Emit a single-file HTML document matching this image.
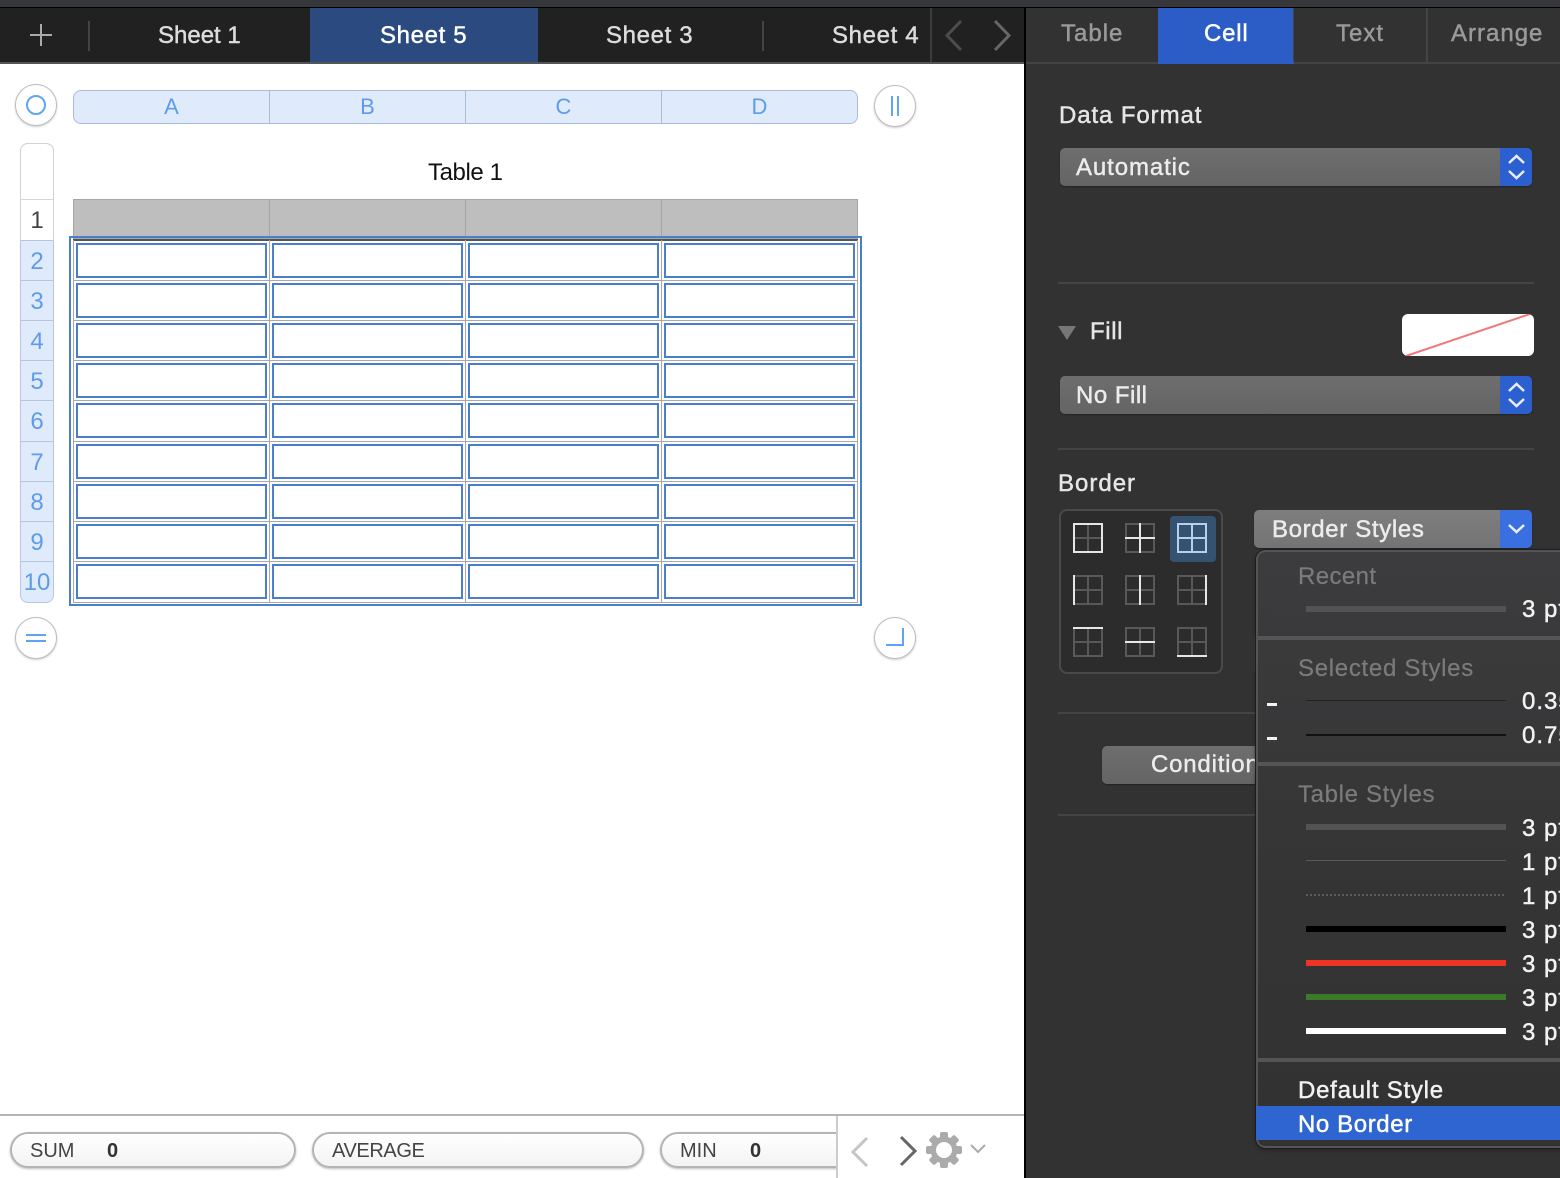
<!DOCTYPE html>
<html><head><meta charset="utf-8"><style>
html,body{margin:0;padding:0;width:1560px;height:1178px;overflow:hidden;background:#323232}
body{position:relative;font-family:"Liberation Sans",sans-serif}
.a{position:absolute}
.t{position:absolute;white-space:nowrap;height:30px;line-height:30px;font-size:24px}
.m{-webkit-text-stroke:.45px currentColor}
.dd{position:absolute;border-radius:5px;height:38px;background:linear-gradient(#6e6e6e,#646464);box-shadow:0 1px 1px #222}
.sep{position:absolute;left:1058px;width:476px;height:2px;background:#444}
.b{position:absolute;background:#2c5fd0;left:1500px;width:32px;height:38px;border-radius:0 5px 5px 0}
.h{position:absolute;box-sizing:border-box;width:42px;height:42px;border:1.500px solid #bdbdbd;border-radius:50%;background:#fff;box-shadow:0 1px 2px #ccc}
.rn{position:absolute;left:20px;width:34px;text-align:center;font-size:24px;line-height:30px;height:30px;color:#5e9bea}
.cl{position:absolute;top:92px;text-align:center;font-size:22px;line-height:30px;color:#5e9bea;width:197px}
.pt{position:absolute;left:1522px;white-space:nowrap;height:30px;line-height:30px;font-size:24px;letter-spacing:1px;color:#f2f2f2;-webkit-text-stroke:.45px currentColor}
.ln{position:absolute;left:1306px;width:200px}
.hd{position:absolute;left:1298px;white-space:nowrap;height:30px;line-height:30px;font-size:24px;color:#7b7b7b;-webkit-text-stroke:.2px currentColor}
.pl{position:absolute;top:1132px;height:32px;border:2px solid #b4b4b4;border-radius:18px;background:linear-gradient(#fff,#f3f3f3);box-shadow:0 1px 2px #bbb}
.st{position:absolute;top:1136px;line-height:30px;height:30px;font-size:20px;color:#444;white-space:nowrap}
</style></head><body>

<!-- top strip -->
<div class="a" style="left:0;top:0;width:1560px;height:7px;background:#36373a"></div>
<div class="a" style="left:0;top:7px;width:1560px;height:1px;background:#000"></div>

<!-- left document -->
<div class="a" style="left:0;top:8px;width:1024px;height:54px;background:#212121"></div>
<div class="a" style="left:0;top:62px;width:1024px;height:2px;background:#555"></div>
<div class="a" style="left:0;top:64px;width:1024px;height:1114px;background:#fff"></div>
<div class="a" style="left:1024px;top:8px;width:2px;height:1170px;background:#000"></div>

<div class="a" style="left:310px;top:8px;width:228px;height:54px;background:#2b4a80"></div>
<div class="a" style="left:88px;top:21px;width:2px;height:30px;background:#444"></div>
<div class="a" style="left:762px;top:21px;width:2px;height:30px;background:#444"></div>
<div class="a" style="left:930px;top:8px;width:2px;height:54px;background:#3c3c3c"></div>
<svg class="a" style="left:0;top:8px" width="1024" height="54">
<path d="M41 16V38M30 27H52" stroke="#aaa" stroke-width="2" fill="none"/>
<path d="M961 13L947 27.500L961 42" stroke="#4d4d4d" stroke-width="3" fill="none"/>
<path d="M995 13L1009 27.500L995 42" stroke="#666" stroke-width="3" fill="none"/>
</svg>
<div class="t m" style="left:158px;top:21px;color:#ddd">Sheet 1</div>
<div class="t m" style="left:380px;top:21px;color:#fff;letter-spacing:.65px">Sheet 5</div>
<div class="t m" style="left:606px;top:21px;color:#ddd;letter-spacing:.65px">Sheet 3</div>
<div class="t m" style="left:832px;top:21px;color:#ddd;letter-spacing:.65px">Sheet 4</div>

<!-- handles -->
<div class="h" style="left:15px;top:84px"></div>
<div class="a" style="left:26px;top:95px;width:16px;height:16px;border:2px solid #5fa4f4;border-radius:50%"></div>
<div class="h" style="left:874px;top:85px"></div>
<div class="a" style="left:891px;top:96px;width:2px;height:20px;background:#5fa4f4"></div>
<div class="a" style="left:897px;top:96px;width:2px;height:20px;background:#5fa4f4"></div>
<div class="h" style="left:15px;top:617px"></div>
<div class="a" style="left:26px;top:634px;width:20px;height:2px;background:#5fa4f4"></div>
<div class="a" style="left:26px;top:640px;width:20px;height:2px;background:#5fa4f4"></div>
<div class="h" style="left:874px;top:617px"></div>
<div class="a" style="left:886px;top:644px;width:18px;height:2px;background:#5fa4f4"></div>
<div class="a" style="left:902px;top:628px;width:2px;height:18px;background:#5fa4f4"></div>

<!-- col header -->
<div class="a" style="left:73px;top:90px;width:783px;height:32px;background:#dfeafb;border:1px solid #a9bcd8;border-radius:8px"></div>
<div class="a" style="left:269px;top:91px;width:1px;height:32px;background:#a9bcd8"></div>
<div class="a" style="left:465px;top:91px;width:1px;height:32px;background:#a9bcd8"></div>
<div class="a" style="left:661px;top:91px;width:1px;height:32px;background:#a9bcd8"></div>
<div class="cl" style="left:73px">A</div>
<div class="cl" style="left:269px">B</div>
<div class="cl" style="left:465px">C</div>
<div class="cl" style="left:661px">D</div>

<!-- row header -->
<div class="a" style="left:20px;top:143px;width:32px;height:458px;background:#dfeafb;border:1px solid #b7c6dd;border-radius:8px;overflow:hidden">
<div class="a" style="left:0;top:0;width:32px;height:96px;background:#fff"></div>
</div>
<div class="a" style="left:20px;top:143px;width:32px;height:96px;border:1px solid #d2d2d2;border-bottom:1px solid #b7c6dd;border-radius:8px 8px 0 0"></div>
<svg class="a" style="left:20px;top:190px" width="34" height="380">
<g fill="#b7c6dd"><rect x="1" y="50" width="32" height="1"/><rect x="1" y="90" width="32" height="1"/><rect x="1" y="130" width="32" height="1"/><rect x="1" y="170" width="32" height="1"/><rect x="1" y="210" width="32" height="1"/><rect x="1" y="251" width="32" height="1"/><rect x="1" y="291" width="32" height="1"/><rect x="1" y="331" width="32" height="1"/><rect x="1" y="371" width="32" height="1"/></g>
<rect x="1" y="9" width="32" height="1" fill="#d8d8d8"/>
</svg>
<div class="rn" style="top:206px;color:#444">1</div>
<div class="rn" style="top:247px">2</div>
<div class="rn" style="top:287px">3</div>
<div class="rn" style="top:327px">4</div>
<div class="rn" style="top:367px">5</div>
<div class="rn" style="top:407px">6</div>
<div class="rn" style="top:448px">7</div>
<div class="rn" style="top:488px">8</div>
<div class="rn" style="top:528px">9</div>
<div class="rn" style="top:568px">10</div>

<div class="t" style="left:428px;top:158px;color:#111;letter-spacing:-.4px">Table 1</div>

<!-- table -->
<svg class="a" style="left:60px;top:190px" width="810" height="425">
<rect x="13.500" y="9.500" width="784" height="39" fill="#bdbebd" stroke="#a6a6a6"/>
<g fill="#a6a6a6"><rect x="209" y="9" width="1" height="40"/><rect x="405" y="9" width="1" height="40"/><rect x="601" y="9" width="1" height="40"/></g>
<rect x="13" y="49" width="785" height="2" fill="#555"/>
<g fill="#a8a8a8">
<rect x="13" y="50" width="1" height="363"/><rect x="209" y="50" width="1" height="363"/><rect x="405" y="50" width="1" height="363"/><rect x="601" y="50" width="1" height="363"/><rect x="797" y="50" width="1" height="363"/>
<rect x="13" y="90" width="785" height="1"/><rect x="13" y="130" width="785" height="1"/><rect x="13" y="170" width="785" height="1"/><rect x="13" y="210" width="785" height="1"/><rect x="13" y="251" width="785" height="1"/><rect x="13" y="291" width="785" height="1"/><rect x="13" y="331" width="785" height="1"/><rect x="13" y="371" width="785" height="1"/><rect x="13" y="412" width="785" height="1"/>
</g>
<rect x="10" y="47" width="791" height="368" fill="none" stroke="#4a7fcb" stroke-width="2"/>
<g fill="none" stroke="#4a7fcb" stroke-width="2">
<g id="r"><rect x="17" y="54" width="189" height="33"/><rect x="213" y="54" width="189" height="33"/><rect x="409" y="54" width="189" height="33"/><rect x="605" y="54" width="189" height="33"/></g>
<use href="#r" y="40"/><use href="#r" y="80"/><use href="#r" y="120"/><use href="#r" y="160"/><use href="#r" y="201"/><use href="#r" y="241"/><use href="#r" y="281"/><use href="#r" y="321"/>
</g>
</svg>

<!-- status bar -->
<div class="a" style="left:0;top:1114px;width:1024px;height:2px;background:#b5b5b5"></div>
<div class="pl" style="left:10px;width:282px"></div>
<div class="pl" style="left:312px;width:328px"></div>
<div class="pl" style="left:660px;width:200px"></div>
<div class="a" style="left:837px;top:1116px;width:187px;height:62px;background:#fff"></div>
<div class="a" style="left:836px;top:1116px;width:2px;height:62px;background:#ccc"></div>
<div class="st" style="left:30px">SUM</div>
<div class="st" style="left:107px;font-weight:bold;color:#333">0</div>
<div class="st" style="left:332px;letter-spacing:-.4px">AVERAGE</div>
<div class="st" style="left:680px">MIN</div>
<div class="st" style="left:750px;font-weight:bold;color:#333">0</div>
<svg class="a" style="left:840px;top:1120px" width="184" height="58">
<path d="M27 18L13 32L27 46" fill="none" stroke="#c6c6c6" stroke-width="3"/>
<path d="M61 17L75 31L61 45" fill="none" stroke="#666" stroke-width="3"/>
<g transform="translate(104,30)" fill="#ababab">
<rect x="-4" y="-18" width="8" height="36" rx="2"/><rect x="-4" y="-18" width="8" height="36" rx="2" transform="rotate(45)"/><rect x="-4" y="-18" width="8" height="36" rx="2" transform="rotate(90)"/><rect x="-4" y="-18" width="8" height="36" rx="2" transform="rotate(135)"/>
<circle r="13.500"/><circle r="8" fill="#fff"/>
</g>
<path d="M131 25L138 32L145 25" fill="none" stroke="#aaa" stroke-width="2"/>
</svg>

<!-- right panel tabs -->
<div class="a" style="left:1026px;top:62px;width:534px;height:2px;background:#434343"></div>
<div class="a" style="left:1158px;top:8px;width:136px;height:56px;background:#2c5cc5"></div>
<div class="a" style="left:1293px;top:8px;width:1px;height:54px;background:#444"></div>
<div class="a" style="left:1426px;top:8px;width:2px;height:54px;background:#444"></div>
<div class="t m" style="left:1061px;top:19px;color:#9a9a9a;letter-spacing:1px">Table</div>
<div class="t m" style="left:1204px;top:19px;color:#fff;letter-spacing:.8px">Cell</div>
<div class="t m" style="left:1336px;top:19px;color:#9a9a9a;letter-spacing:1px">Text</div>
<div class="t m" style="left:1451px;top:19px;color:#9a9a9a;letter-spacing:1px">Arrange</div>

<div class="t m" style="left:1059px;top:101px;color:#e6e6e6;letter-spacing:.9px">Data Format</div>
<div class="dd" style="left:1060px;top:148px;width:472px"></div>
<div class="b" style="top:148px"></div>
<div class="t m" style="left:1076px;top:153px;color:#ececec;letter-spacing:.9px">Automatic</div>
<svg class="a" style="left:1500px;top:148px" width="32" height="38"><path d="M9 15L16.500 8L24 15M9 23L16.500 30L24 23" fill="none" stroke="#e8eefa" stroke-width="2.500"/></svg>

<div class="sep" style="top:282px"></div>
<svg class="a" style="left:1056px;top:322px" width="24" height="22"><path d="M2 4H20L11 18Z" fill="#777"/></svg>
<div class="t m" style="left:1090px;top:317px;color:#e6e6e6;letter-spacing:.6px">Fill</div>
<div class="a" style="left:1402px;top:314px;width:132px;height:42px;background:#fff;border-radius:6px;overflow:hidden">
<svg width="132" height="42"><path d="M4 42L128 0" stroke="#f07878" stroke-width="2"/></svg></div>
<div class="dd" style="left:1060px;top:376px;width:472px"></div>
<div class="b" style="top:376px"></div>
<div class="t m" style="left:1076px;top:381px;color:#ececec;letter-spacing:.5px">No Fill</div>
<svg class="a" style="left:1500px;top:376px" width="32" height="38"><path d="M9 15L16.500 8L24 15M9 23L16.500 30L24 23" fill="none" stroke="#e8eefa" stroke-width="2.500"/></svg>

<div class="sep" style="top:448px"></div>
<div class="t m" style="left:1058px;top:469px;color:#e6e6e6;letter-spacing:1px">Border</div>

<!-- border grid -->
<div class="a" style="left:1059px;top:509px;width:160px;height:161px;background:#2c2c2c;border:2px solid #4a4a4a;border-radius:8px"></div>
<div class="a" style="left:1170px;top:516px;width:46px;height:46px;background:#355370;border-radius:4px"></div>
<svg class="a" style="left:1060px;top:510px" width="160" height="160">
<defs>
<g id="g" fill="none" stroke="#585858" stroke-width="2"><rect x="1" y="1" width="28" height="28"/><path d="M15 0V30M0 15H30"/></g>
</defs>
<g transform="translate(13,13)"><use href="#g"/><rect x="1" y="1" width="28" height="28" fill="none" stroke="#e6e6e6" stroke-width="2"/></g>
<g transform="translate(65,13)"><use href="#g"/><path d="M15 0V30M0 15H30" stroke="#e6e6e6" stroke-width="2"/></g>
<g transform="translate(117,13)" fill="none" stroke="#b4d2ee" stroke-width="2"><rect x="1" y="1" width="28" height="28"/><path d="M15 0V30M0 15H30"/></g>
<g transform="translate(13,65)"><use href="#g"/><path d="M1 0V30" stroke="#e6e6e6" stroke-width="2"/></g>
<g transform="translate(65,65)"><use href="#g"/><path d="M15 0V30" stroke="#e6e6e6" stroke-width="2"/></g>
<g transform="translate(117,65)"><use href="#g"/><path d="M29 0V30" stroke="#e6e6e6" stroke-width="2"/></g>
<g transform="translate(13,117)"><use href="#g"/><path d="M0 1H30" stroke="#e6e6e6" stroke-width="2"/></g>
<g transform="translate(65,117)"><use href="#g"/><path d="M0 15H30" stroke="#e6e6e6" stroke-width="2"/></g>
<g transform="translate(117,117)"><use href="#g"/><path d="M0 29H30" stroke="#e6e6e6" stroke-width="2"/></g>
</svg>

<div class="dd" style="left:1254px;top:510px;width:278px;background:linear-gradient(#7e7e7e,#747474)"></div>
<div class="b" style="top:510px;background:#3a6fe0"></div>
<div class="t m" style="left:1272px;top:515px;color:#ececec;letter-spacing:.65px">Border Styles</div>
<svg class="a" style="left:1500px;top:510px" width="32" height="38"><path d="M9 15L16.500 22L24 15" fill="none" stroke="#e8eefa" stroke-width="2.500"/></svg>

<div class="a" style="left:1254px;top:636px;width:2px;height:36px;background:#3e3e3e"></div>
<div class="sep" style="top:712px;width:200px"></div>
<div class="sep" style="top:814px;width:200px"></div>
<div class="dd" style="left:1102px;top:746px;width:170px"></div>
<div class="t m" style="left:1151px;top:750px;color:#ececec;letter-spacing:.8px">Condition</div>

<!-- popup -->
<div class="a" style="left:1256px;top:550px;width:320px;height:598px;background:linear-gradient(#3c3c3e,#343434 60%,#323232);border-radius:10px;box-shadow:inset 2px 0 #555,inset 0 2px #555,inset 0 -2px #555,0 0 0 1px #1c1c1c,0 2px 4px #222;overflow:hidden">
<div class="a" style="left:0;top:86px;width:320px;height:4px;background:#555"></div>
<div class="a" style="left:0;top:212px;width:320px;height:4px;background:#555"></div>
<div class="a" style="left:0;top:508px;width:320px;height:4px;background:#555"></div>
<div class="a" style="left:0;top:556px;width:320px;height:34px;background:#2f65d0"></div>
</div>
<div class="hd" style="top:562px;letter-spacing:.4px">Recent</div>
<div class="ln" style="top:606px;height:6px;background:#535353"></div>
<div class="pt" style="top:595px">3 pt</div>
<div class="hd" style="top:654px;letter-spacing:.7px">Selected Styles</div>
<div class="a" style="left:1267px;top:703px;width:10px;height:3px;background:#f2f2f2"></div>
<div class="a" style="left:1267px;top:737px;width:10px;height:3px;background:#f2f2f2"></div>
<div class="ln" style="top:700px;height:1px;background:#222"></div>
<div class="ln" style="top:734px;height:2px;background:#111"></div>
<div class="pt" style="top:687px">0.35 pt</div>
<div class="pt" style="top:721px">0.75 pt</div>
<div class="hd" style="top:780px;letter-spacing:.65px">Table Styles</div>
<div class="ln" style="top:824px;height:6px;background:#535353"></div>
<div class="ln" style="top:860px;height:1px;background:#5a5a5a"></div>
<div class="ln" style="top:894px;height:2px;background:repeating-linear-gradient(90deg,#5c5c5c 0 2px,transparent 2px 4px)"></div>
<div class="ln" style="top:926px;height:6px;background:#000"></div>
<div class="ln" style="top:960px;height:6px;background:#ee3524"></div>
<div class="ln" style="top:994px;height:6px;background:#3a7a28"></div>
<div class="ln" style="top:1028px;height:6px;background:#fff"></div>
<div class="pt" style="top:814px">3 pt</div>
<div class="pt" style="top:848px">1 pt</div>
<div class="pt" style="top:882px">1 pt</div>
<div class="pt" style="top:916px">3 pt</div>
<div class="pt" style="top:950px">3 pt</div>
<div class="pt" style="top:984px">3 pt</div>
<div class="pt" style="top:1018px">3 pt</div>
<div class="t m" style="left:1298px;top:1076px;color:#f2f2f2;letter-spacing:.75px">Default Style</div>
<div class="t m" style="left:1298px;top:1110px;color:#fff;letter-spacing:.6px">No Border</div>

</body></html>
